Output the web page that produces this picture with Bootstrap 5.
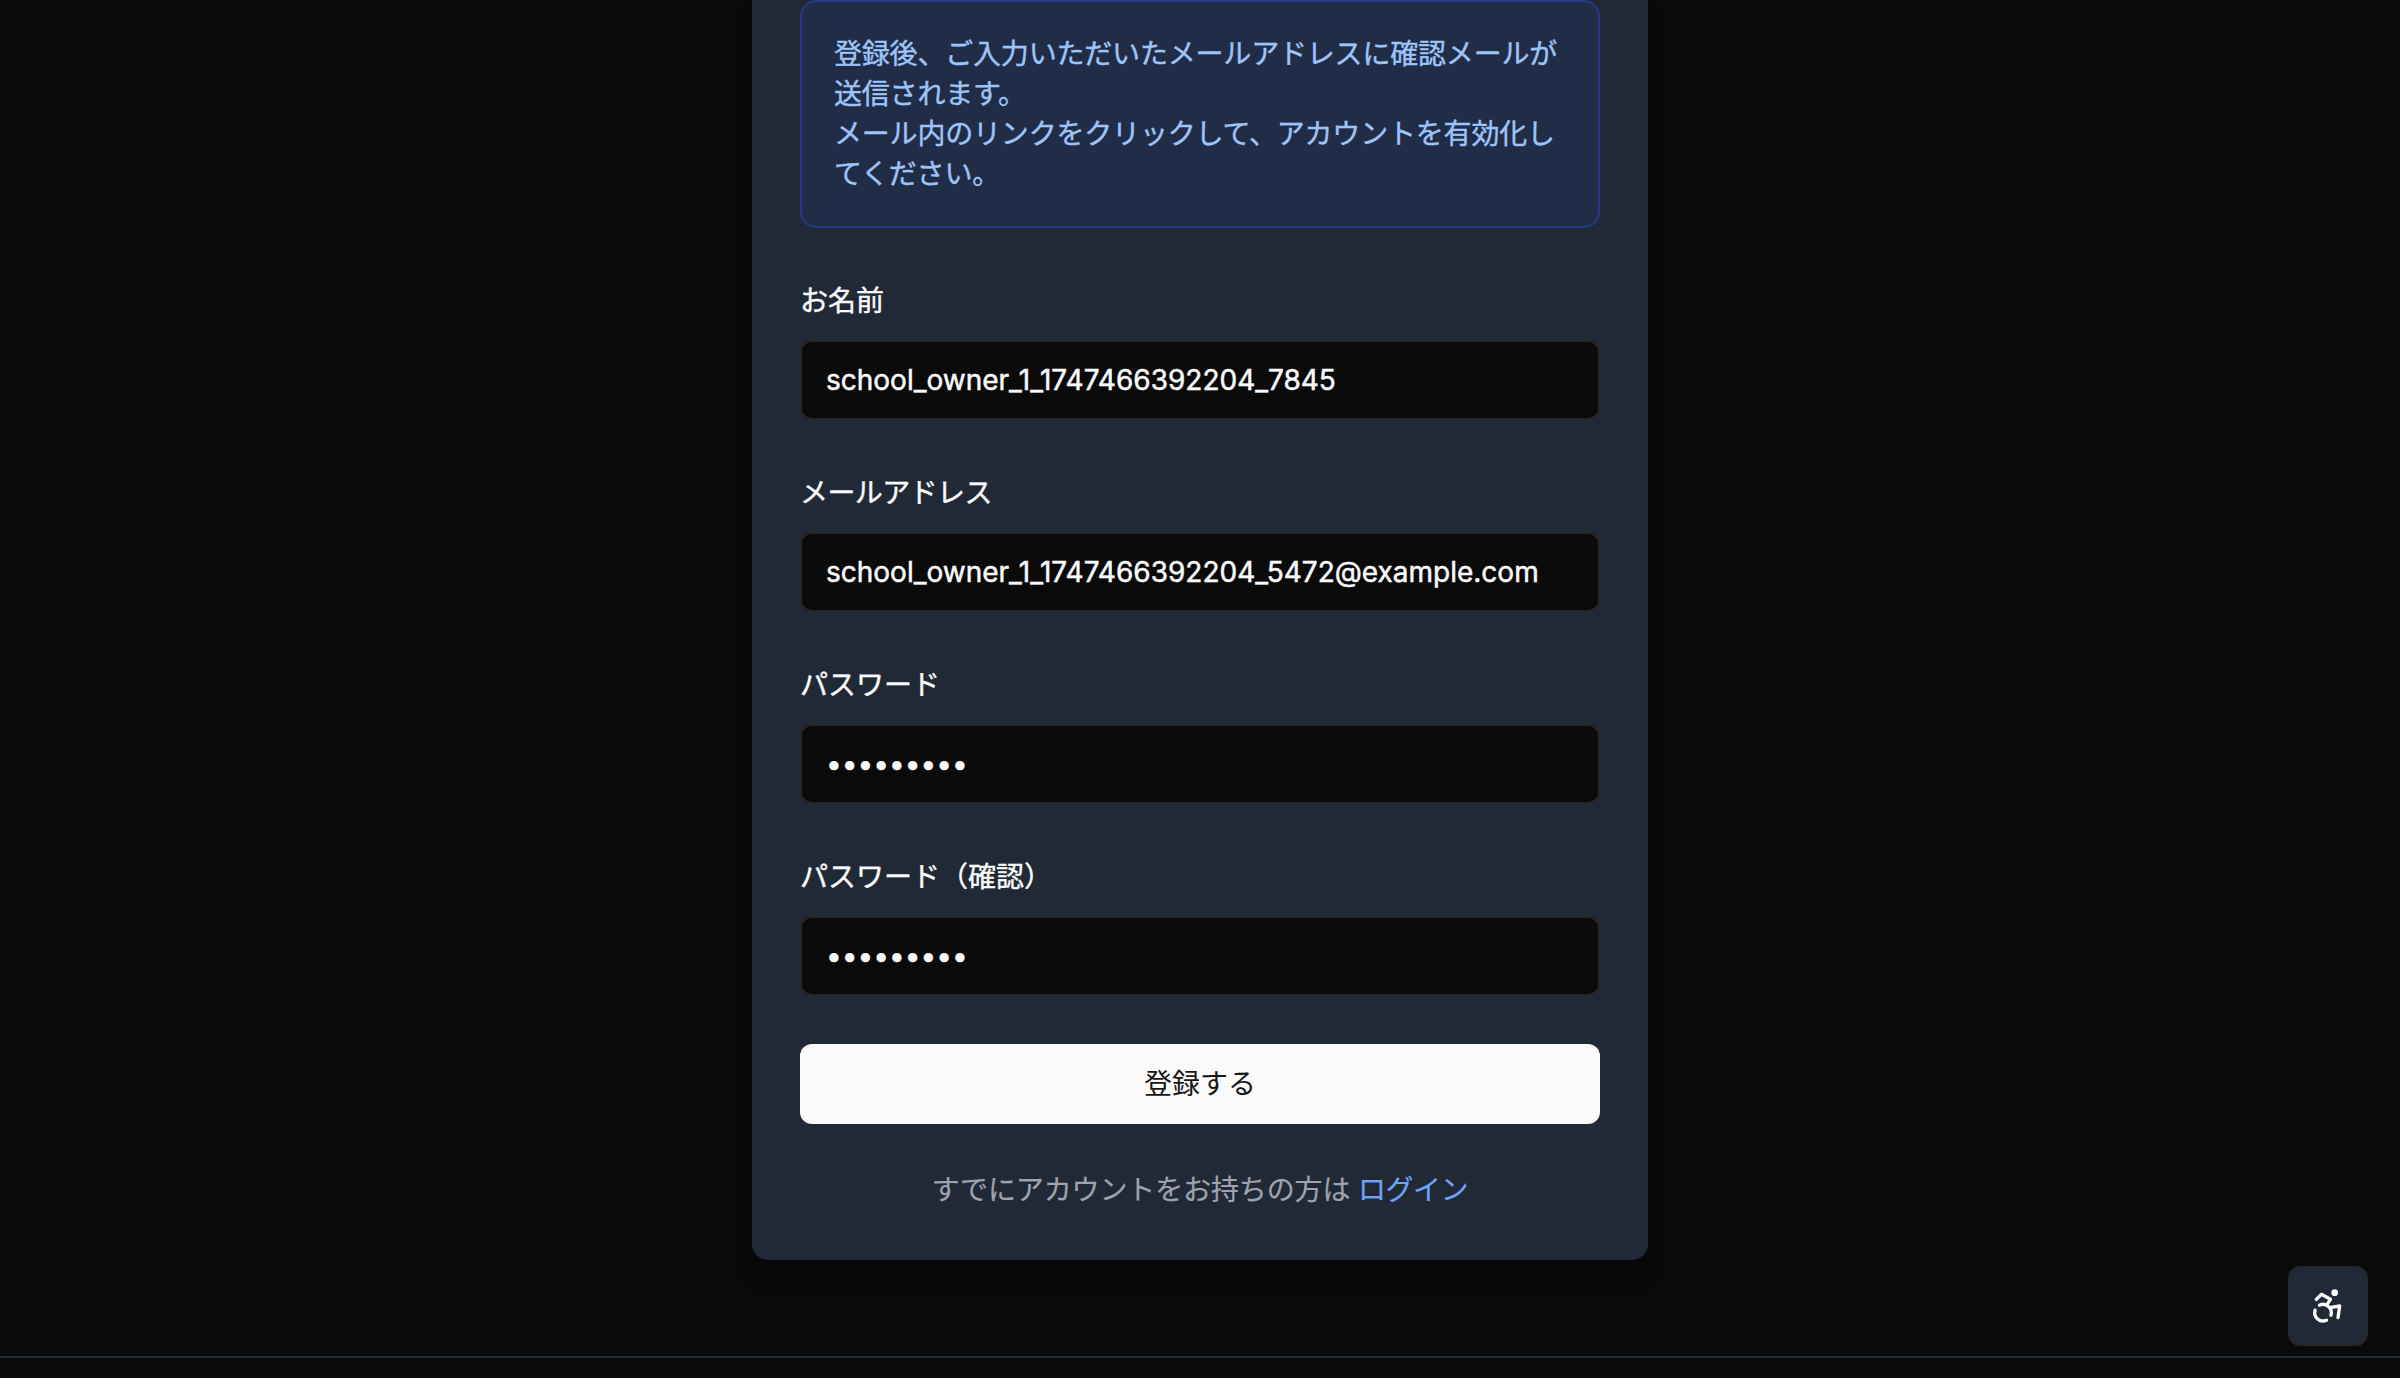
<!DOCTYPE html>
<html lang="ja" data-bs-theme="dark">
<head>
<meta charset="utf-8">
<title>アカウント登録</title>
<link href="https://cdn.jsdelivr.net/npm/bootstrap@5.3.0/dist/css/bootstrap.min.css" rel="stylesheet">
<style>
body{background:#0a0a0a;color:#fafafa;font-family:Inter,"Noto Sans CJK JP",sans-serif;font-size:28px;line-height:40px;height:1378px;overflow:hidden}
.page-main{height:1356px}
.signup-card{width:896px;height:1260px;background:#222936;border:0;border-radius:0 0 16px 16px;padding:0 48px;box-shadow:0 20px 30px -6px rgba(0,0,0,.1),0 8px 12px -8px rgba(0,0,0,.1),0 0 14px rgba(0,0,0,.2)}
.notice{height:228px;padding:32px;margin:0 0 52px;background:#212c46;border:2px solid #253985;border-radius:16px;color:#9dc4f8;letter-spacing:-.19px;-webkit-text-stroke:.4px currentColor}
.field-block{height:140px;margin-bottom:52px}
.field-block .form-label{display:block;margin:0 0 19px;padding-top:1px;color:#fafafa;-webkit-text-stroke:.4px currentColor}
.label-tight{letter-spacing:-.6px}
.field-block .form-control{height:80px;padding:0 24px;background:#0a0a0a;border:2px solid #262626;border-radius:12px;color:#fafafa;font-size:28px;line-height:40px;-webkit-text-stroke:.5px currentColor}
.btn-signup{height:80px;margin-top:-4px;padding:0;border:0;border-radius:12px;background:#fafafa;color:#171717;font-size:28px;line-height:80px}
.signin-row{margin-top:46px;color:#9ea3ae;letter-spacing:-.12px;-webkit-text-stroke:.2px currentColor}
.signin-row a{color:#6ea3f7;letter-spacing:-.5px}
.page-foot{height:22px;border-top:2px solid #1f2a3b}
.a11y-btn{width:80px;height:80px;right:32px;bottom:32px;background:#222936;border:2px solid #262626;border-radius:12px;color:#fafafa;padding:0}
</style>
<script src="https://cdn.jsdelivr.net/npm/bootstrap@5.3.0/dist/js/bootstrap.bundle.min.js"></script>
</head>
<body>
<main class="page-main d-flex justify-content-center align-items-start">
  <form class="card signup-card">
    <div class="alert notice">登録後、ご入力いただいたメールアドレスに確認メールが送信されます。<br>メール内のリンクをクリックして、アカウントを有効化してください。</div>
    <div class="field-block"><label class="form-label" for="name">お名前</label><input class="form-control" id="name" type="text" value="school_owner_1_1747466392204_7845"></div>
    <div class="field-block"><label class="form-label label-tight" for="email">メールアドレス</label><input class="form-control" id="email" type="text" value="school_owner_1_1747466392204_5472@example.com"></div>
    <div class="field-block"><label class="form-label" for="pw">パスワード</label><input class="form-control" id="pw" type="password" value="password1"></div>
    <div class="field-block"><label class="form-label" for="pw2">パスワード（確認）</label><input class="form-control" id="pw2" type="password" value="password1"></div>
    <button class="btn btn-signup w-100" type="button">登録する</button>
    <p class="signin-row text-center mb-0">すでにアカウントをお持ちの方は <a class="text-decoration-none" href="#">ログイン</a></p>
  </form>
</main>
<footer class="page-foot"></footer>
<button class="btn a11y-btn position-fixed d-flex align-items-center justify-content-center" type="button" aria-label="アクセシビリティ">
  <svg width="40" height="40" viewBox="0 0 24 24" fill="none" stroke="currentColor" stroke-width="2" stroke-linecap="round" stroke-linejoin="round"><circle cx="16" cy="4" r="1"/><path d="m18 19 1-7-6 1"/><path d="m5 8 3-3 5.5 3-2.36 3.5"/><path d="M4.24 14.5a5 5 0 0 0 6.88 6"/><path d="M13.76 17.5a5 5 0 0 0-6.88-6"/></svg>
</button>
</body>
</html>
